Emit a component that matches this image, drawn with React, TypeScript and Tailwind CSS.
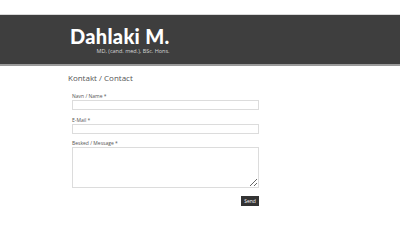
import React from 'react'

const sans = { fontFamily: '"Open Sans", "Liberation Sans", sans-serif' }

export default function App() {
  return (
    <div className="w-[400px] h-[250px] bg-white overflow-hidden" style={sans}>
      <div className="h-[15px] border-b border-[#d9d9d9]" />
      <header className="h-[51px] bg-[#3e3e3e] border-b-2 border-[#9a9a9a] pl-[70px] pt-[11px]">
        <div className="inline-flex flex-col items-end">
          <h1
            className="text-[20px] leading-[20px] font-bold text-white tracking-[0.3px]"
            style={{ fontFamily: 'Lato, "Open Sans", sans-serif', fontWeight: 900 }}
          >
            Dahlaki M.
          </h1>
          <p className="text-[5.5px] leading-[7px] text-[#d6d6d6] mt-[2px]">
            MD, (cand. med.), BSc. Hons.
          </p>
        </div>
      </header>

      <main className="pl-[68px] pt-[6px] w-[260px]">
        <h2 className="text-[8px] leading-[12px] text-[#555]">Kontakt / Contact</h2>

        <form className="flex flex-col pl-[4px] pt-[9px]" onSubmit={(e) => e.preventDefault()}>
          <label className="text-[5px] leading-[6px] text-[#555] mb-[1px]">Navn / Name *</label>
          <input className="h-[10px] w-[187px] border border-[#dcdcdc] bg-white" />

          <label className="text-[5px] leading-[6px] text-[#555] mt-[7px] mb-[1px]">E-Mail *</label>
          <input className="h-[10px] w-[187px] border border-[#dcdcdc] bg-white" />

          <label className="text-[5px] leading-[6px] text-[#555] mt-[6px] mb-[1px]">
            Besked / Message *
          </label>
          <textarea className="h-[41px] w-[187px] border border-[#dcdcdc] bg-white resize-y" />

          <div className="flex w-[187px] justify-end mt-[8px]">
            <button
              type="submit"
              className="h-[10px] w-[18px] bg-[#333] text-white text-[5px] leading-[10px]"
            >
              Send
            </button>
          </div>
        </form>
      </main>
    </div>
  )
}
